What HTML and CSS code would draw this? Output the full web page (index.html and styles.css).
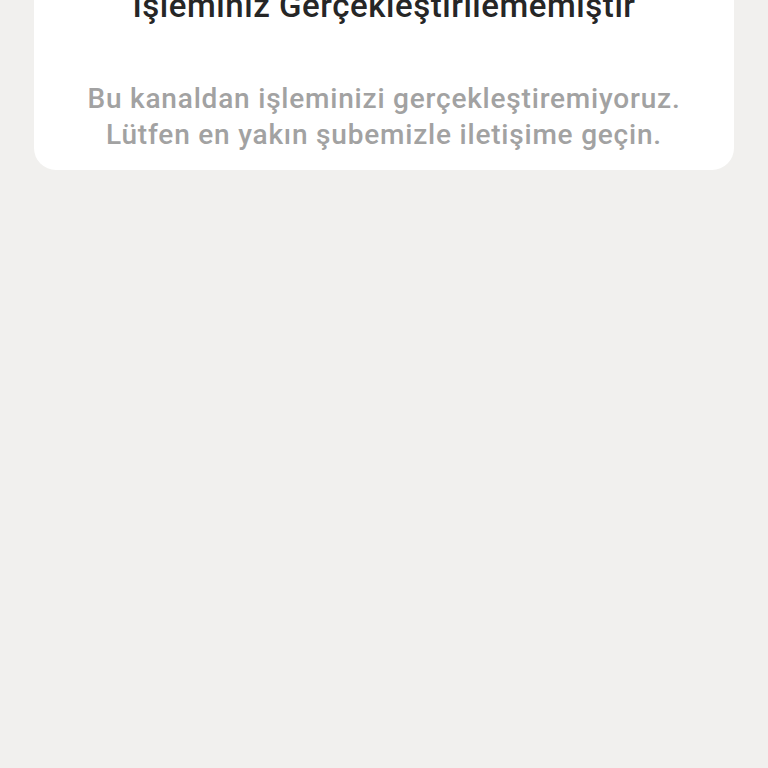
FILE: index.html
```html
<!DOCTYPE html>
<html lang="tr">
  <head>
    <meta charset="utf-8">
    <meta name="viewport" content="width=device-width, initial-scale=1.0">
    <title>İşlem Sonucu</title>
    <link rel="stylesheet" href="styles.css">
  </head>
  <body>
    <!-- sonuç kartı: üst kısmı ekranın dışında kalıyor -->
    <div class="result-card">
      <h1 class="result-title">İşleminiz Gerçekleştirilememiştir</h1>
      <p class="result-message">Bu kanaldan işleminizi gerçekleştiremiyoruz.<br>Lütfen en yakın şubemizle iletişime geçin.</p>
    </div>
  </body>
</html>
```

FILE: styles.css
```css
* {
  box-sizing: border-box;
}
html, body {
  margin: 0;
  padding: 0;
  background-color: #f1f0ee;
  font-family: Roboto, "Noto Sans", sans-serif;
}

/* beyaz kart */
.result-card {
  margin: -14px 34px 0;
  padding: 0 10px 17px;
  background-color: #fff;
  border-radius: 0 0 22px 22px;
  text-align: center;
}

.result-title {
  margin: 0;
  font-size: 33px;
  font-weight: 500;
  line-height: 40px;
  letter-spacing: 0.55px;
  color: #262626;
}

.result-message {
  margin: 55px 0 0;
  font-size: 28px;
  font-weight: 500;
  line-height: 36px;
  letter-spacing: 0.8px;
  color: #a2a2a2;
}
```
